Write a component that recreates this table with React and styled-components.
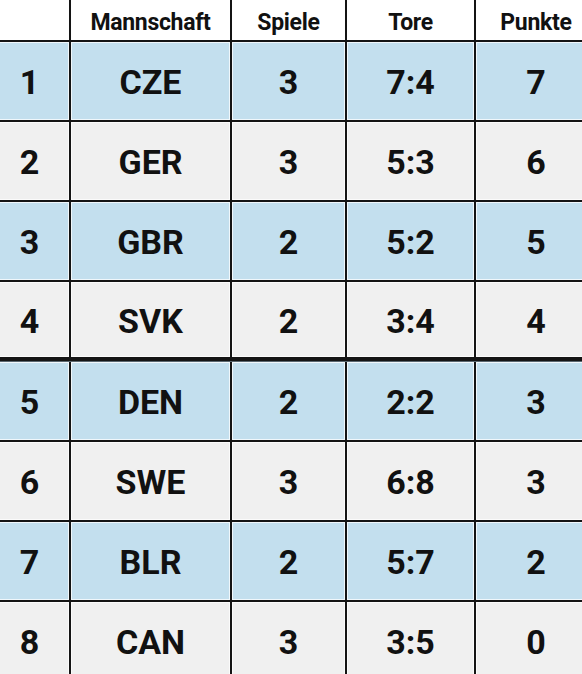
import React from "react";
import styled, { createGlobalStyle } from "styled-components";

const Global = createGlobalStyle`
  html, body { margin: 0; padding: 0; background: #ffffff; overflow: hidden; }
  body { font-family: Roboto, "Liberation Sans", Arial, sans-serif; }
`;

const Table = styled.div`
  display: flex;
  flex-direction: column;
  gap: 2px;
  width: 600px;
  margin-left: -10px;
  background: #141414;
`;

const Row = styled.div`
  display: grid;
  grid-template-columns: 79px 159px 113px 127px 120px;
  column-gap: 2px;
  height: ${(p) => p.$h}px;
  margin-top: ${(p) => (p.$split ? 2 : 0)}px;
  border-top: ${(p) => (p.$split ? "1px solid #5a6870" : "none")};
`;

const Cell = styled.div`
  display: flex;
  align-items: center;
  justify-content: center;
  background: ${(p) => p.$bg};
  box-shadow: inset 0 0 0 1px rgba(255, 255, 255, 0.75);
  color: #111;
  font-weight: 700;
  font-size: ${(p) => (p.$head ? 23 : 34)}px;
  padding-top: ${(p) => (p.$head ? 4 : 2)}px;
  letter-spacing: ${(p) => (p.$head ? "-0.3px" : "0")};
`;

const HeadCell = styled(Cell).attrs({ $head: true, $bg: "#ffffff" })`
  box-shadow: none;
`;

const data = [
  ["1", "CZE", "3", "7:4", "7"],
  ["2", "GER", "3", "5:3", "6"],
  ["3", "GBR", "2", "5:2", "5"],
  ["4", "SVK", "2", "3:4", "4"],
  ["5", "DEN", "2", "2:2", "3"],
  ["6", "SWE", "3", "6:8", "3"],
  ["7", "BLR", "2", "5:7", "2"],
  ["8", "CAN", "3", "3:5", "0"],
];

const heads = ["", "Mannschaft", "Spiele", "Tore", "Punkte"];

export default function App() {
  return (
    <>
      <Global />
      <Table>
        <Row $h={40}>
          {heads.map((h, i) => (
            <HeadCell key={i}>{h}</HeadCell>
          ))}
        </Row>
        {data.map((r, i) => (
          <Row key={i} $h={i === 3 ? 75 : 78} $split={i === 4}>
            {r.map((c, j) => (
              <Cell key={j} $bg={i % 2 === 0 ? "#c3dfee" : "#f0f0f0"}>
                {c}
              </Cell>
            ))}
          </Row>
        ))}
      </Table>
    </>
  );
}
